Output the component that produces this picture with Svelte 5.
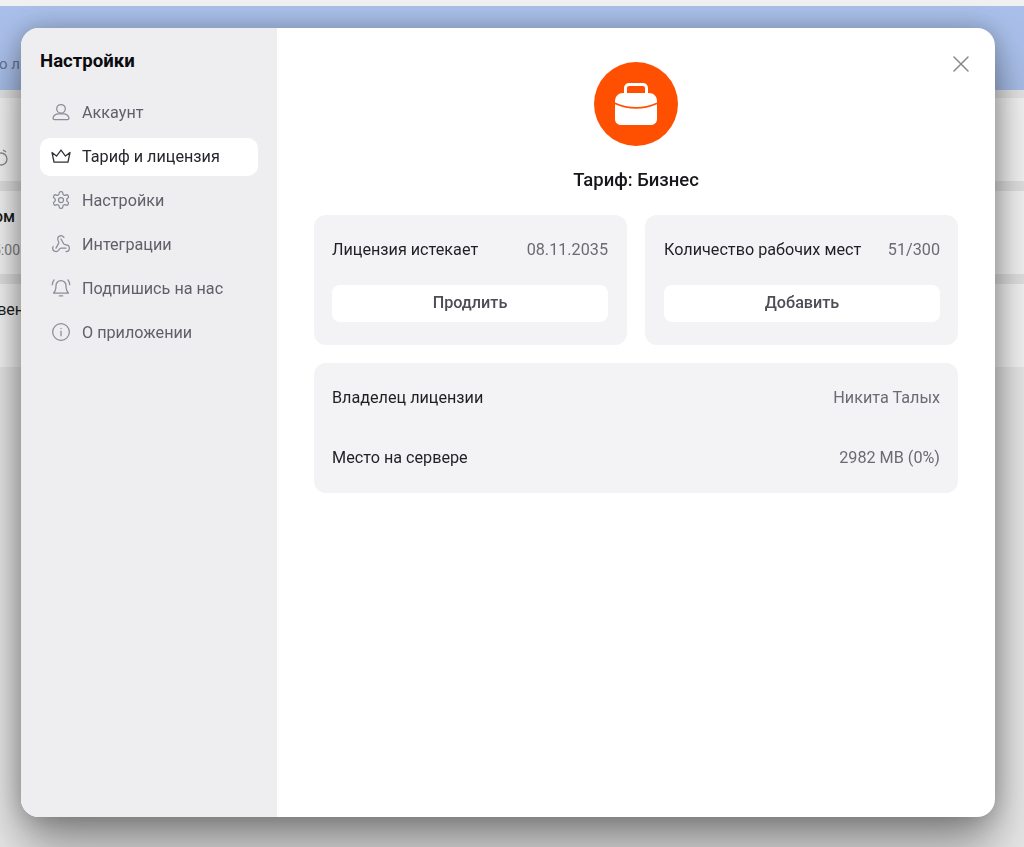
<script>
  const navItems = [
    { id: 'account', label: 'Аккаунт' },
    { id: 'plan', label: 'Тариф и лицензия', active: true },
    { id: 'settings', label: 'Настройки' },
    { id: 'integrations', label: 'Интеграции' },
    { id: 'subscribe', label: 'Подпишись на нас' },
    { id: 'about', label: 'О приложении' }
  ];
</script>

<div class="page">
  <div class="topline"></div>
  <header class="hero"><span class="sliver hero-text">о л</span></header>
  <div class="strip thin"></div>
  <div class="row">
    <svg class="row-icon" width="18" height="18" viewBox="0 0 18 18" fill="none" stroke="#8a8a8a" stroke-width="1.3">
      <circle cx="6" cy="10" r="6" />
      <path d="M1 3l3-2M11 3l-3-2" />
    </svg>
  </div>
  <div class="strip"></div>
  <div class="row">
    <span class="sliver row-title">ом</span>
    <span class="sliver row-time">5:00</span>
  </div>
  <div class="strip"></div>
  <div class="row">
    <span class="sliver row-title plain">вен</span>
  </div>
</div>

<div class="modal">
  <aside class="sidebar">
    <h2>Настройки</h2>
    <nav>
      {#each navItems as item}
        <div class="nav-item" class:active={item.active}>
          <svg class="nav-icon" width="20" height="20" viewBox="0 0 24 24" fill="none" stroke-width="1.5" stroke-linecap="round" stroke-linejoin="round">
            {#if item.id === 'account'}
              <g transform="scale(1.2)" stroke-width="1.25">
                <circle cx="10" cy="6.800" r="4.300" />
                <path d="M3.500 17.600c-1 0-1.600-.8-1.400-1.800.5-2.400 2.800-4 5.500-4h4.800c2.700 0 5 1.600 5.500 4 .2 1-.4 1.800-1.400 1.800z" />
              </g>
            {:else if item.id === 'plan'}
              <g transform="scale(1.2)" stroke-width="1.25">
                <path d="M1 6.500L5.500 10 10 4l4.500 6L19 6.500 17 16H3z" />
              </g>
            {:else if item.id === 'settings'}
              <path d="M12.220 2h-.44a2 2 0 0 0-2 2v.18a2 2 0 0 1-1 1.730l-.43.25a2 2 0 0 1-2 0l-.15-.08a2 2 0 0 0-2.730.73l-.22.38a2 2 0 0 0 .73 2.730l.15.1a2 2 0 0 1 1 1.720v.51a2 2 0 0 1-1 1.740l-.15.09a2 2 0 0 0-.73 2.730l.22.38a2 2 0 0 0 2.730.73l.15-.08a2 2 0 0 1 2 0l.43.25a2 2 0 0 1 1 1.730V20a2 2 0 0 0 2 2h.44a2 2 0 0 0 2-2v-.18a2 2 0 0 1 1-1.730l.43-.25a2 2 0 0 1 2 0l.15.08a2 2 0 0 0 2.730-.73l.22-.39a2 2 0 0 0-.73-2.730l-.15-.08a2 2 0 0 1-1-1.740v-.5a2 2 0 0 1 1-1.740l.15-.09a2 2 0 0 0 .73-2.730l-.22-.38a2 2 0 0 0-2.730-.73l-.15.08a2 2 0 0 1-2 0l-.43-.25a2 2 0 0 1-1-1.730V4a2 2 0 0 0-2-2z" />
              <circle cx="12" cy="12" r="3" />
            {:else if item.id === 'integrations'}
              <path d="M18 16.980h-5.990c-1.100 0-1.950.94-2.480 1.900A4 4 0 0 1 2 17c.01-.7.2-1.400.57-2" />
              <path d="M6 17l3.130-5.780c.53-.97.1-2.180-.5-3.100a4 4 0 1 1 6.890-4.060" />
              <path d="M12 6l3.130 5.730C15.660 12.700 16.900 13 18 13a4 4 0 0 1 0 8" />
            {:else if item.id === 'subscribe'}
              <path d="M6 9a6 6 0 0 1 12 0c0 6.500 3 9 3 9H3s3-2.500 3-9" />
              <path d="M10 21.500h4M1.500 8c.1-2.200.9-4.200 2.200-5.800M22.500 8c-.1-2.200-.9-4.200-2.200-5.800" />
            {:else}
              <circle cx="12" cy="12" r="10" />
              <path d="M12 11v5.500M12 7.500v.3" />
            {/if}
          </svg>
          <span>{item.label}</span>
        </div>
      {/each}
    </nav>
  </aside>

  <main class="content">
    <button class="close" aria-label="Закрыть">
      <svg width="16" height="16" viewBox="0 0 16 16" fill="none" stroke="#858791" stroke-width="1.5" stroke-linecap="round">
        <path d="M1 1l14 14M15 1L1 15" />
      </svg>
    </button>

    <div class="plan-badge">
      <svg width="42" height="42" viewBox="0 0 42 42" fill="none">
        <rect x="10.500" y="1.500" width="21" height="13" rx="3.500" stroke="#fff" stroke-width="3" />
        <path d="M0 18.500C0 13 3.500 10 8 10h26c4.500 0 8 3 8 8.500v1Q21 28.500 0 19.500z" fill="#fff" />
        <path d="M0 21.300Q21 30.300 42 21.300V36c0 3.500-2.500 6-6 6H6c-3.500 0-6-2.500-6-6z" fill="#fff" />
      </svg>
    </div>
    <h3>Тариф: Бизнес</h3>

    <div class="cards">
      <section class="card">
        <div class="line"><span>Лицензия истекает</span><span class="value">08.11.2035</span></div>
        <button class="action">Продлить</button>
      </section>
      <section class="card">
        <div class="line"><span>Количество рабочих мест</span><span class="value">51/300</span></div>
        <button class="action">Добавить</button>
      </section>
    </div>

    <section class="card details">
      <div class="line tall"><span>Владелец лицензии</span><span class="value">Никита Талых</span></div>
      <div class="line tall"><span>Место на сервере</span><span class="value">2982 MB (0%)</span></div>
    </section>
  </main>
</div>

<style>
  :global(body) {
    margin: 0;
    background: #e8e8e8;
    font-family: Roboto, "Noto Sans", sans-serif;
    overflow: hidden;
  }

  .page {
    height: 847px;
    overflow: hidden;
    background: #e8e8e8;
  }

  .topline {
    height: 6px;
    background: #f0f0f0;
  }

  .hero {
    height: 84px;
    background: #a9bfe9;
    display: flex;
    align-items: flex-end;
    padding-bottom: 17px;
    box-sizing: border-box;
  }

  /* only the tail of the page's text shows left of the modal */
  .sliver {
    display: flex;
    justify-content: flex-end;
    width: 21px;
    overflow: hidden;
    white-space: nowrap;
  }

  .hero-text {
    padding-right: 1px;
    width: 20px;
    font-size: 15px;
    color: #66718c;
  }

  .strip {
    height: 10px;
    background: #e2e2e2;
  }

  .strip.thin {
    height: 8px;
    background: #e6e6e6;
  }

  .row {
    height: 83px;
    box-sizing: border-box;
    padding-top: 17px;
    background: #f5f5f5;
    overflow: hidden;
  }

  .row-icon {
    display: block;
    margin: 34px 0 0 -5px;
  }

  .row-title {
    width: 15px;
    font-size: 16px;
    line-height: 18px;
    font-weight: 500;
    color: #1c1c1c;
  }

  .row-title.plain {
    width: 24px;
    font-weight: 400;
  }

  .row-time {
    width: 20px;
    margin-top: 16px;
    font-size: 14px;
    line-height: 16px;
    color: #808080;
  }

  .modal {
    position: fixed;
    left: 21px;
    top: 28px;
    width: 974px;
    height: 789px;
    display: flex;
    background: #fff;
    border-radius: 18px;
    overflow: hidden;
    box-shadow: 0 30px 50px rgba(0, 0, 0, 0.4), 0 0 24px rgba(0, 0, 0, 0.25);
  }

  .sidebar {
    flex: 0 0 256px;
    box-sizing: border-box;
    padding: 22px 19px;
    background: #eeeef0;
  }

  h2 {
    margin: 0 0 22px;
    font-size: 18.6px;
    line-height: 22px;
    font-weight: 700;
    color: #0b0b0f;
  }

  nav {
    display: flex;
    flex-direction: column;
    gap: 6px;
  }

  .nav-item {
    display: flex;
    align-items: center;
    gap: 11px;
    box-sizing: border-box;
    height: 38px;
    padding: 0 12px 2px 11px;
    border-radius: 10px;
    font-size: 16.200px;
    color: #5f6069;
  }

  .nav-item.active {
    background: #fff;
    color: #26262c;
  }

  .nav-icon {
    flex: none;
    stroke: #8a8c99;
  }

  .active .nav-icon {
    stroke: #2f3038;
  }

  .content {
    position: relative;
    flex: 1;
    box-sizing: border-box;
    padding: 34px 37px;
  }

  .close {
    position: absolute;
    top: 28px;
    right: 26px;
    padding: 0;
    border: 0;
    background: none;
    line-height: 0;
  }

  .plan-badge {
    width: 84px;
    height: 84px;
    margin: 0 auto;
    border-radius: 50%;
    background: #ff4f00;
    display: flex;
    align-items: center;
    justify-content: center;
  }

  h3 {
    margin: 23px 0 24px;
    text-align: center;
    font-size: 18.500px;
    line-height: 22px;
    font-weight: 500;
    color: #17171b;
  }

  .cards {
    display: grid;
    grid-template-columns: 1fr 1fr;
    gap: 18px;
  }

  .card {
    box-sizing: border-box;
    height: 130px;
    padding: 18px 19px 18px 18px;
    background: #f3f3f5;
    border-radius: 12px;
  }

  .card + .card {
    padding: 18px 18px 18px 19px;
  }

  .details,
  .card.details {
    margin-top: 18px;
    padding: 4px 18px;
  }

  .line {
    display: flex;
    justify-content: space-between;
    align-items: center;
    height: 32px;
    margin-bottom: 20px;
    font-size: 16.200px;
    color: #1f1f24;
  }

  .line.tall {
    height: 60px;
    margin: 0;
  }

  .value {
    color: #6a6b74;
  }

  .action {
    display: block;
    width: 100%;
    height: 37px;
    padding: 0 0 2px;
    border: 0;
    border-radius: 8px;
    background: #fff;
    font: 500 16.200px Roboto, sans-serif;
    color: #4c4d56;
  }
</style>
